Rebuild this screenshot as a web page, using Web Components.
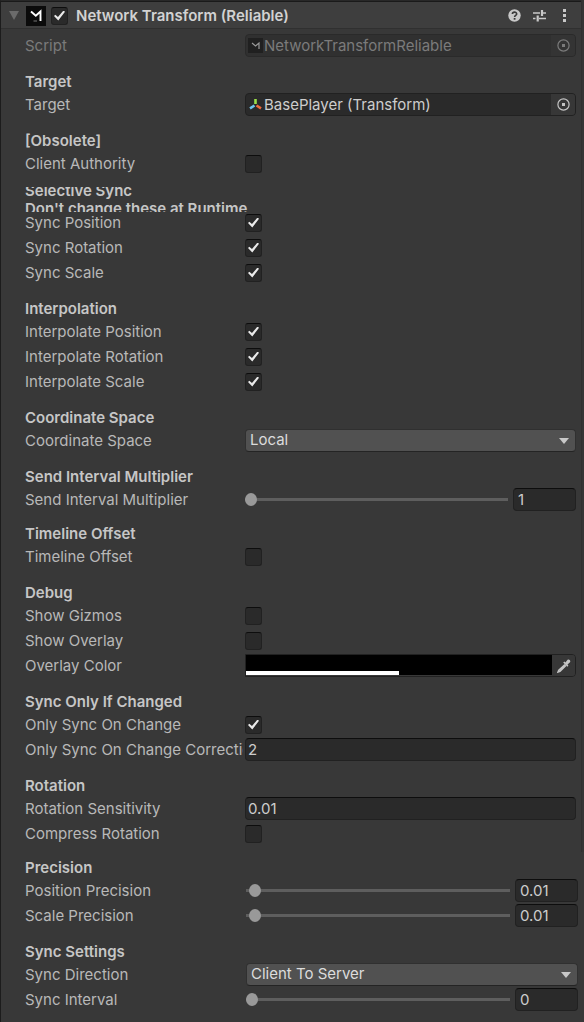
<!DOCTYPE html>
<html lang="en">
<head>
<meta charset="utf-8">
<meta name="viewport" content="width=device-width, initial-scale=1">
<title>Inspector</title>
<style>
html { background: #383838; }
body { margin: 0; font-family: Inter, "Liberation Sans", sans-serif; font-size: 15px; font-optical-sizing: none; line-height: 18px; color: #b8b8b8; }
</style>
</head>
<body>
<inspector-panel>
  <component-header>Network Transform (Reliable)</component-header>
  <object-field value="NetworkTransformReliable" icon="script" disabled>Script</object-field>

  <field-section><span slot="title">Target</span>
    <object-field value="BasePlayer (Transform)" icon="transform">Target</object-field>
  </field-section>

  <field-section><span slot="title">[Obsolete]</span>
    <toggle-field>Client Authority</toggle-field>
  </field-section>

  <field-section><span slot="title">Selective Sync<br>Don't change these at Runtime</span>
    <toggle-field checked>Sync Position</toggle-field>
    <toggle-field checked>Sync Rotation</toggle-field>
    <toggle-field checked>Sync Scale</toggle-field>
  </field-section>

  <field-section><span slot="title">Interpolation</span>
    <toggle-field checked>Interpolate Position</toggle-field>
    <toggle-field checked>Interpolate Rotation</toggle-field>
    <toggle-field checked>Interpolate Scale</toggle-field>
  </field-section>

  <field-section><span slot="title">Coordinate Space</span>
    <select-field options="Local|World">Coordinate Space</select-field>
  </field-section>

  <field-section><span slot="title">Send Interval Multiplier</span>
    <slider-field value="1" min="1" max="100">Send Interval Multiplier</slider-field>
  </field-section>

  <field-section tight><span slot="title">Timeline Offset</span>
    <toggle-field>Timeline Offset</toggle-field>
  </field-section>

  <field-section><span slot="title">Debug</span>
    <toggle-field>Show Gizmos</toggle-field>
    <toggle-field>Show Overlay</toggle-field>
    <color-field>Overlay Color</color-field>
  </field-section>

  <field-section><span slot="title">Sync Only If Changed</span>
    <toggle-field checked>Only Sync On Change</toggle-field>
    <number-field value="2">Only Sync On Change Correction Multiplier</number-field>
  </field-section>

  <field-section><span slot="title">Rotation</span>
    <number-field value="0.01">Rotation Sensitivity</number-field>
    <toggle-field>Compress Rotation</toggle-field>
  </field-section>

  <field-section tight outset><span slot="title">Precision</span>
    <slider-field value="0.01" min="0" max="1">Position Precision</slider-field>
    <slider-field value="0.01" min="0" max="1">Scale Precision</slider-field>
  </field-section>

  <field-section outset><span slot="title">Sync Settings</span>
    <select-field options="Client To Server|Server To Client">Sync Direction</select-field>
    <slider-field value="0" min="0" max="2">Sync Interval</slider-field>
  </field-section>
</inspector-panel>

<script>
const CHECK = `
  input[type=checkbox] { appearance: none; box-sizing: border-box; margin: 0; width: 17px; height: 18px; flex: none;
    background: #2a2a2a; border: 1px solid #212121; border-top-color: #0d0d0d; border-radius: 3px; display: grid; place-items: center; }
  input[type=checkbox]:checked::before { content: ""; width: 11px; height: 10px; background: #eaeaea;
    clip-path: polygon(0 56%, 12% 42%, 36% 66%, 86% 0, 100% 12%, 39% 100%); }`;

class InspectorPanel extends HTMLElement {
  constructor() {
    super();
    this.attachShadow({ mode: "open" }).innerHTML = `
      <style>
        :host { display: grid; grid-template-columns: minmax(0, 1fr) 3px; min-height: 100vh; background: #383838; }
        main { border-left: 1px solid #1c1c1c; border-top: 1px solid #282828; padding-bottom: 10px; }
        aside { border-left: 1px solid #303030; background: #353535; margin-bottom: 170px; }
      </style>
      <main><slot></slot></main><aside></aside>`;
  }
}

class ComponentHeader extends HTMLElement {
  constructor() {
    super();
    this.attachShadow({ mode: "open" }).innerHTML = `
      <style>
        :host { display: block; margin-bottom: 4px; }
        header { display: flex; align-items: center; box-sizing: border-box; height: 28px; padding: 1px 10px 0 8px;
          background: #3e3e3e; border-top: 1px solid #1a1a1a; border-bottom: 1px solid #303030; }
        h1 { flex: 1; margin: 0 0 0 8px; font: inherit; font-optical-sizing: none; font-weight: 600; color: #d2d2d2; white-space: nowrap; }
        button { border: 0; padding: 0; margin: 0; background: none; display: grid; place-items: center; }
        svg { display: block; }
        .logo { margin: 0 5px 0 7px; }
        .tools { display: flex; gap: 12px; }
        ${CHECK}
      </style>
      <header>
        <button aria-label="Collapse"><svg width="10" height="10"><path d="M0 0H10L5 9Z" fill="#6b6b6b"/></svg></button>
        <svg class="logo" width="20" height="20"><path d="M0 0H20V20H0Z" fill="#0b0b0b"/><path d="M5 5.5L9.8 9.8L14.5 5.5V15" fill="none" stroke="#fff" stroke-width="1.9"/><path d="M7.5 15H11" stroke="#777" stroke-width="1"/></svg>
        <input type="checkbox" checked aria-label="Enabled">
        <h1><slot></slot></h1>
        <div class="tools">
          <button aria-label="Help"><svg width="13" height="13"><circle cx="6.5" cy="6.5" r="6.2" fill="#c8c8c8"/><path d="M4.4 5.1C4.4 2.5 8.7 2.5 8.7 5C8.7 6.5 6.6 6.4 6.6 8" fill="none" stroke="#3a3a3a" stroke-width="1.6"/><path d="M5.7 9H7.5V10.7H5.7Z" fill="#3a3a3a"/></svg></button>
          <button aria-label="Presets"><svg width="13" height="13"><path d="M0 4H7M10 4H13M0 9.5H2.5M6 9.5H13" stroke="#c8c8c8" stroke-width="1.3"/><path d="M9 1V7M4.7 6.5V12.5" stroke="#c8c8c8" stroke-width="2.2"/></svg></button>
          <button aria-label="More"><svg width="13" height="13"><path d="M5 0H8V3H5ZM5 5H8V8H5ZM5 10H8V13H5Z" fill="#c8c8c8"/></svg></button>
        </div>
      </header>`;
  }
}

class FieldSection extends HTMLElement {
  constructor() {
    super();
    this.attachShadow({ mode: "open" }).innerHTML = `
      <style>
        :host { display: block; padding-top: 11px; }
        :host([tight]) { padding-top: 9px; }
        :host([outset]) { --outset: 1px; }
        h2 { margin: 0 0 -2px 24px; height: 25px; overflow: hidden; display: flex; align-items: center;
          font: inherit; font-optical-sizing: none; font-weight: 600; color: #c6c6c6; white-space: nowrap; }
      </style>
      <h2><slot name="title"></slot></h2><slot></slot>`;
  }
}

class BaseField extends HTMLElement {
  connectedCallback() {
    if (this.shadowRoot) return;
    this.attachShadow({ mode: "open" }).innerHTML = `
      <style>
        :host { display: grid; grid-template-columns: 218px minmax(0, 1fr); column-gap: calc(2px + var(--outset, 0px)); align-items: center;
          height: 25px; padding-left: 24px; padding-right: calc(5px - 2 * var(--outset, 0px)); }
        label { overflow: hidden; white-space: nowrap; line-height: 18px; }
        :host([disabled]) { color: #7b7b7b; }
        .control { display: flex; align-items: center; min-width: 0; }
        input, select, button { font: inherit; font-optical-sizing: none; color: inherit; margin: 0; box-sizing: border-box; outline: none; }
        button { border: 0; padding: 0; background: #373737; display: grid; place-items: center; flex: none; }
        input.text { flex: 1; min-width: 0; width: 0; height: 23px; padding: 0 2px; color: #cdcdcd; background: #2a2a2a;
          border: 1px solid #212121; border-top-color: #0d0d0d; border-radius: 4px; }
        svg { display: block; }
        ${this.css()}
      </style>
      <label for="field"><slot></slot></label>
      <div class="control">${this.control()}</div>`;
  }
  css() { return ""; }
  get value() { return this.getAttribute("value") || ""; }
}

class ToggleField extends BaseField {
  css() { return CHECK; }
  control() { return `<input type="checkbox" id="field" ${this.hasAttribute("checked") ? "checked" : ""}>`; }
}

class NumberField extends BaseField {
  control() { return `<input class="text" id="field" inputmode="decimal" value="${this.value}">`; }
}

class SliderField extends BaseField {
  css() {
    return `
      .control { gap: 5px; }
      input[type=range] { appearance: none; flex: 1; min-width: 0; height: 13px; background: none; }
      input[type=range]::-webkit-slider-runnable-track { height: 3px; background: #5e5e5e; }
      input[type=range]::-webkit-slider-thumb { appearance: none; width: 12px; height: 13px; margin-top: -5px; border-radius: 50%; background: #999; }
      input.text { flex: none; width: 63px; padding: 0 4px; }`;
  }
  control() {
    return `<input type="range" id="field" min="${this.getAttribute("min")}" max="${this.getAttribute("max")}" step="0.01" value="${this.value}">
      <input class="text" inputmode="decimal" aria-label="Value" value="${this.value}">`;
  }
}

class SelectField extends BaseField {
  css() {
    return `
      .control { display: grid; grid-template-columns: minmax(0, 1fr); }
      select, svg { grid-area: 1 / 1; }
      select { appearance: none; height: 23px; padding: 0 24px 1px 4px; color: #dcdcdc; background: #515151;
        border: 1px solid #303030; border-bottom-color: #242424; border-radius: 4px; }
      svg { justify-self: end; margin-right: 7px; pointer-events: none; }`;
  }
  control() {
    const options = this.getAttribute("options").split("|").map(o => `<option>${o}</option>`).join("");
    return `<select id="field">${options}</select><svg width="10" height="6"><path d="M0 0H10L5 6Z" fill="#c8c8c8"/></svg>`;
  }
}

const OBJECT_ICONS = {
  script: `<svg width="15" height="15"><path d="M0 0H15V15H0Z" fill="#202020"/><path d="M4 5L7.5 8L11 5V11" fill="none" stroke="#999" stroke-width="1.2"/></svg>`,
  transform: `<svg width="15" height="15"><g fill="none" stroke-width="2.6"><path d="M7.5 2V7" stroke="#9be04a"/><path d="M6.5 8.5L2 11.3" stroke="#6fc4ee"/><path d="M8.5 8.5L13 11.3" stroke="#ef6a3c"/></g></svg>`
};

class ObjectField extends BaseField {
  css() {
    return `
      .box { display: flex; align-items: center; flex: 1; min-width: 0; box-sizing: border-box; height: 23px; padding-left: 2px;
        background: #2a2a2a; border: 1px solid #212121; border-radius: 4px; overflow: hidden; }
      :host([disabled]) .box { background: #303030; border-color: #2a2a2a; }
      .box input { flex: 1; min-width: 0; height: 21px; border: 0; padding: 0 1px; background: none; color: #cdcdcd; }
      button { width: 24px; height: 21px; color: #c4c4c4; }
      :host([disabled]) input { color: #7b7b7b; }
      :host([disabled]) button { color: #7b7b7b; background: #343434; }`;
  }
  control() {
    const off = this.hasAttribute("disabled") ? "disabled" : "";
    return `<div class="box">${OBJECT_ICONS[this.getAttribute("icon")]}
      <input id="field" readonly ${off} value="${this.value}">
      <button aria-label="Pick object" ${off}><svg width="13" height="13"><circle cx="6.5" cy="6.5" r="5.6" fill="none" stroke="currentColor" stroke-width="1.2"/><path d="M5 5H8V8H5Z" fill="currentColor"/></svg></button></div>`;
  }
}

class ColorField extends BaseField {
  css() {
    return `
      .box { display: flex; flex: 1; box-sizing: border-box; height: 23px; border: 1px solid #212121; border-radius: 0 4px 4px 0; overflow: hidden; }
      .swatch { flex: 1; height: 20px; background: linear-gradient(#fff, #fff) left bottom / 50% 4px no-repeat #000; }
      .pick { width: 23px; height: 21px; }`;
  }
  control() {
    return `<div class="box"><button class="swatch" id="field"></button>
      <button class="pick" aria-label="Eyedropper"><svg width="14" height="14"><path d="M8 5.5L1.8 11.2L1 13L3 12.3L8.9 6.4" fill="none" stroke="#c4c4c4" stroke-width="1.5"/><path d="M6.2 3.6L7.4 2.6L8.4 3.5L10.6 0.8C12 -0.3 14.1 1.7 13 3.2L10.5 5.6L11.4 6.7L10.3 7.8Z" fill="#c4c4c4"/></svg></button></div>`;
  }
}

customElements.define("inspector-panel", InspectorPanel);
customElements.define("component-header", ComponentHeader);
customElements.define("field-section", FieldSection);
customElements.define("toggle-field", ToggleField);
customElements.define("number-field", NumberField);
customElements.define("slider-field", SliderField);
customElements.define("select-field", SelectField);
customElements.define("object-field", ObjectField);
customElements.define("color-field", ColorField);
</script>
</body>
</html>
